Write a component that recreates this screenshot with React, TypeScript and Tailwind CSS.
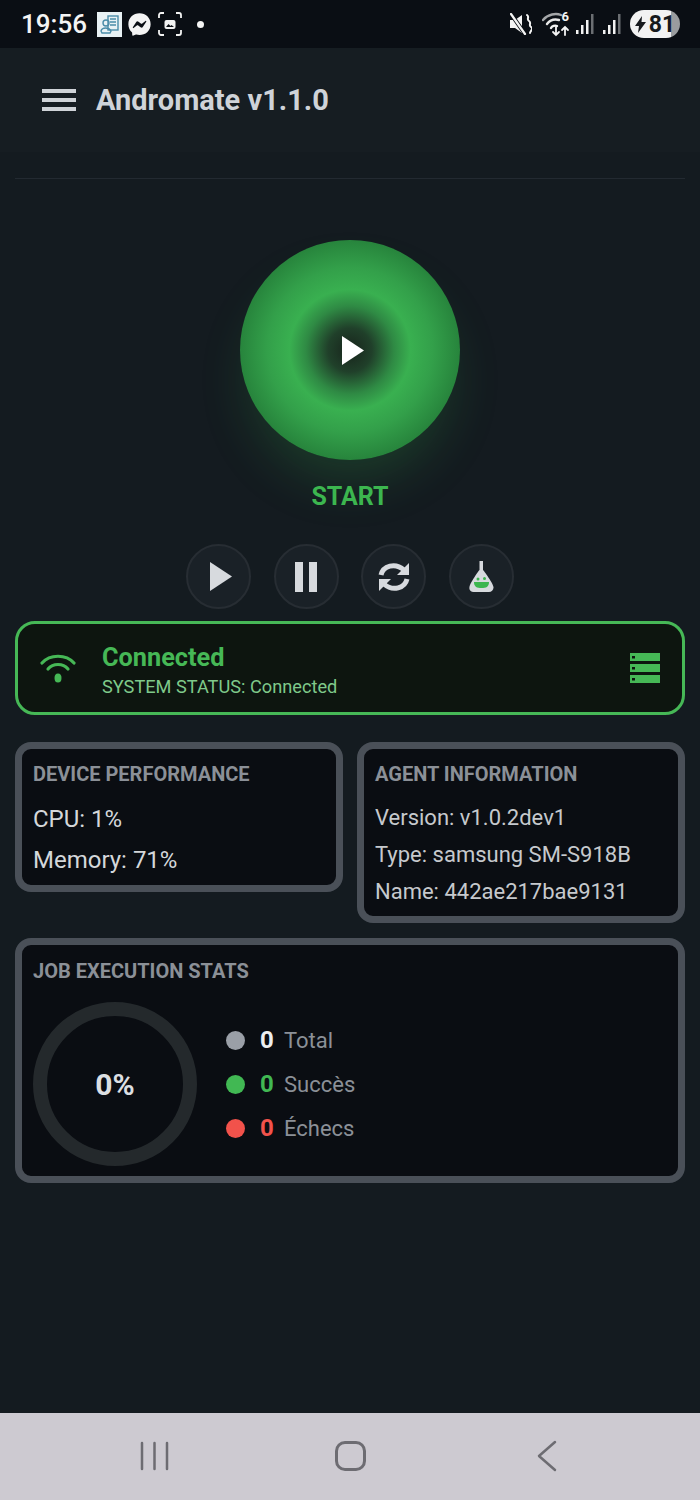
import { FaFacebookMessenger } from 'react-icons/fa';

function SignalBars() {
    return (
        <svg width="18" height="22" viewBox="0 0 18 22">
            <rect x="0" y="17" width="2.5" height="4" fill="#f2f2f2" />
            <rect x="5" y="12" width="2.5" height="9" fill="#f2f2f2" />
            <rect x="10" y="7" width="2.5" height="14" fill="#f2f2f2" />
            <rect x="15" y="1" width="2.5" height="20" fill="#6b6e72" />
        </svg>
    );
}

function StatusBar() {
    return (
        <div className="h-12 bg-[#0a0e14] flex items-center justify-between pl-[21px] pr-5 shrink-0">
            <div className="flex items-center">
                <span className="text-[26px] leading-none font-medium text-[#f4f4f4] w-[76px]">19:56</span>
                <div className="w-[25px] h-[25px] bg-[#e8f1f4] flex items-center justify-center">
                    <svg width="19" height="19" viewBox="0 0 19 19" fill="none" stroke="#4a8ca8" strokeWidth="1.4">
                        <rect x="8" y="1" width="10" height="14" />
                        <path d="M10 4h6M10 7h6M10 10h6" />
                        <circle cx="6" cy="8" r="3" />
                        <path d="M1 16c1-4 8-4 10 0l-1 2H2z" />
                    </svg>
                </div>
                <FaFacebookMessenger className="ml-[6px] text-[#f4f4f4]" size={23} />
                <svg className="ml-[7px]" width="24" height="24" viewBox="0 0 24 24" fill="none" stroke="#f2f2f2" strokeWidth="1.8">
                    <path d="M1 6V3a2 2 0 0 1 2-2h3M18 1h3a2 2 0 0 1 2 2v3M23 18v3a2 2 0 0 1-2 2h-3M6 23H3a2 2 0 0 1-2-2v-3" />
                    <rect x="6.500" y="8" width="11" height="9" rx="2" fill="#f2f2f2" stroke="none" />
                    <path d="M8 15l2.500-3 2 2 1-1 2.500 2z" fill="#0a0e14" stroke="none" />
                </svg>
                <span className="ml-[15px] w-[7px] h-[7px] rounded-full bg-[#f4f4f4]" />
            </div>
            <div className="flex items-center">
                {/* mute */}
                <svg width="22" height="22" viewBox="0 0 22 22" fill="none">
                    <path d="M0 7h5l7-5v18l-7-5H0z" fill="#f4f4f4" />
                    <path d="M1 1l14 20" stroke="#0a0e14" strokeWidth="4" />
                    <path d="M1 1l14 20" stroke="#f4f4f4" strokeWidth="2.200" strokeLinecap="round" />
                    <path d="M17 2c3 2-1 4 2 6s-1 4 2 6-1 4-1 6" stroke="#f4f4f4" strokeWidth="2" strokeLinecap="round" />
                </svg>
                {/* wifi with data arrows */}
                <div className="relative ml-[10px] w-[28px] h-[26px]">
                    <svg width="28" height="26" viewBox="0 0 28 26" fill="none" strokeLinecap="round">
                        <path d="M1 9C6 3 14 2 19 4" stroke="#a4a6a8" strokeWidth="2.400" />
                        <path d="M5 13C8 9 13 8 17 9" stroke="#e8e8e8" strokeWidth="2.400" />
                        <path d="M9 17c1-2 4-3 6-2" stroke="#f4f4f4" strokeWidth="2.400" />
                        <path d="M14 16v8M11 21l3 3 3-3M23 24v-8M20 19l3-3 3 3" stroke="#f4f4f4" strokeWidth="1.800" />
                    </svg>
                    <span className="absolute right-[1px] -top-[1px] text-[13px] leading-none font-bold text-[#f4f4f4]">6</span>
                </div>
                <div className="ml-[6px] flex items-center gap-[9px]">
                    <SignalBars />
                    <SignalBars />
                </div>
                <div className="ml-[9px] w-[50px] h-[28px] rounded-full bg-[linear-gradient(90deg,#f2f2f2_0,#f2f2f2_81%,#9a9c9f_81%)] flex items-center justify-center gap-[3px]">
                    <svg width="11" height="17" viewBox="0 0 11 17" fill="#16191d">
                        <path d="M7 0L0 10h4l-1 7 8-11H6.500z" />
                    </svg>
                    <span className="text-[23px] leading-none font-bold text-[#16191d]">81</span>
                </div>
            </div>
        </div>
    );
}

function ControlButton({ children }: { children: React.ReactNode }) {
    return (
        <button className="w-[65px] h-[65px] rounded-full bg-[#1a2127] border-2 border-[#272d33] flex items-center justify-center">
            {children}
        </button>
    );
}

function Card({ title, className, children }: { title: string; className: string; children: React.ReactNode }) {
    return (
        <div className={`rounded-[16px] border-[7px] border-[#4a5058] bg-[#0a0d12] ${className}`}>
            <h2 className="text-[20px] leading-[24px] font-bold text-[#8b9097]">{title}</h2>
            {children}
        </div>
    );
}

function StatRow({ dot, numColor, label }: { dot: string; numColor: string; label: string }) {
    return (
        <div className="flex items-center h-[44px]">
            <span className={`w-[19px] h-[19px] rounded-full ${dot}`} />
            <span className={`ml-[15px] w-[24px] text-[24px] font-bold ${numColor}`}>0</span>
            <span className="text-[22px] text-[#8b9097]">{label}</span>
        </div>
    );
}

export default function App() {
    return (
        <div className="w-[700px] h-[1500px] flex flex-col bg-[#141b20] font-['Roboto',sans-serif] overflow-hidden">
            <StatusBar />

            {/* header */}
            <div className="h-[104px] shrink-0 bg-[#161d22] flex items-center pl-[42px]">
                <div className="w-[34px] flex flex-col gap-[5px]">
                    <span className="h-[4px] bg-[#cfd3d8]" />
                    <span className="h-[4px] bg-[#cfd3d8]" />
                    <span className="h-[4px] bg-[#cfd3d8]" />
                </div>
                <span className="ml-[20px] text-[29px] leading-none font-bold text-[#cfd3d8]">Andromate v1.1.0</span>
            </div>

            <div className="flex-1 flex flex-col px-[15px]">
                <div className="h-[27px] border-b border-[#232a31]" />

                {/* start */}
                <div className="flex flex-col items-center pt-[61px]">
                    <div className="w-[220px] h-[220px] rounded-full bg-[radial-gradient(circle_closest-side,#18241c_0%,#20402a_20%,#2f8a44_40%,#39b050_55%,#33a04a_75%,#27843c_100%)] shadow-[0_30px_50px_-10px_rgba(55,178,77,0.22)] flex items-center justify-center">
                        <svg className="ml-[6px]" width="22" height="29" viewBox="0 0 22 29" fill="#ffffff">
                            <path d="M0 0L22 14.500L0 29z" />
                        </svg>
                    </div>
                    <span className="mt-[22px] text-[25px] leading-[30px] font-bold text-[#3cb64f]">START</span>
                </div>

                <div className="mt-[32px] flex justify-center gap-[22.6px]">
                    <ControlButton>
                        <svg className="ml-[5px]" width="22" height="29" viewBox="0 0 22 29" fill="#d7dade">
                            <path d="M0 0L22 14.500L0 29z" />
                        </svg>
                    </ControlButton>
                    <ControlButton>
                        <svg width="22" height="30" viewBox="0 0 22 30" fill="#d7dade">
                            <rect x="0" y="0" width="8" height="30" />
                            <rect x="14" y="0" width="8" height="30" />
                        </svg>
                    </ControlButton>
                    <ControlButton>
                        <svg width="32" height="30" viewBox="0 0 32 30" fill="#d7dade">
                            <path d="M3 13C5 4 17 0 26 8" fill="none" stroke="#d7dade" strokeWidth="5" />
                            <path d="M31 1v12H19z" />
                            <path d="M29 17C27 26 15 30 6 22" fill="none" stroke="#d7dade" strokeWidth="5" />
                            <path d="M1 29V17h12z" />
                        </svg>
                    </ControlButton>
                    <ControlButton>
                        <svg width="25" height="31" viewBox="0 0 25 31">
                            <path d="M10.500 0h3.500v9c1 1 10 13 10.500 17 .3 3-2 5-4.500 5H4.500C2 31-.3 29 .5 26 1 22 9.500 10 10.500 9z" fill="#d7dade" />
                            <path d="M5 21h15c0 5-3 6-7.500 6S5 26 5 21z" fill="#3cb64f" />
                            <circle cx="9" cy="18" r="1.500" fill="#3cb64f" />
                            <circle cx="15.500" cy="17.500" r="1.500" fill="#3cb64f" />
                        </svg>
                    </ControlButton>
                </div>

                {/* connection banner */}
                <div className="mt-[12px] h-[94px] rounded-[20px] border-[3px] border-[#46b856] bg-[#0d150f] flex items-center pl-[22px] pr-[22px]">
                    <svg width="36" height="30" viewBox="0 0 36 30" fill="none" stroke="#46b856" strokeWidth="3.200" strokeLinecap="round">
                        <path d="M2 10C10 1 26 1 34 10" />
                        <path d="M8 16C13 10 23 10 28 16" />
                        <ellipse cx="18" cy="25" rx="3.500" ry="4.500" fill="#46b856" stroke="none" />
                    </svg>
                    <div className="ml-[26px] flex-1 pt-[5px]">
                        <div className="text-[25.3px] leading-[30px] font-bold text-[#46b856]">Connected</div>
                        <div className="mt-[2px] text-[18.2px] leading-[24px] text-[#7fc98a]">SYSTEM STATUS: Connected</div>
                    </div>
                    <svg width="30" height="30" viewBox="0 0 30 30" fill="#46b856">
                        <path d="M0 0h30v8H0zM0 11h30v8H0zM0 22h30v8H0z" />
                        <rect x="2" y="3" width="3" height="2.500" fill="#0d150f" />
                        <rect x="2" y="14" width="3" height="2.500" fill="#0d150f" />
                        <rect x="2" y="25" width="3" height="2.500" fill="#0d150f" />
                    </svg>
                </div>

                <div className="mt-[27px] flex items-start gap-[14px]">
                    <Card title="DEVICE PERFORMANCE" className="flex-1 h-[150px] px-[11px] pt-[13px]">
                        <div className="mt-[13px] text-[24px] leading-[41px] text-[#d4d7da]">
                            <div>CPU: 1%</div>
                            <div>Memory: 71%</div>
                        </div>
                    </Card>
                    <Card title="AGENT INFORMATION" className="flex-1 h-[181px] px-[11px] pt-[13px]">
                        <div className="mt-[13px] text-[22px] leading-[37px] text-[#c6c9cd]">
                            <div>Version: v1.0.2dev1</div>
                            <div>Type: samsung SM-S918B</div>
                            <div>Name: 442ae217bae9131</div>
                        </div>
                    </Card>
                </div>

                <Card title="JOB EXECUTION STATS" className="mt-[15px] h-[245px] px-[11px] pt-[14px]">
                    <div className="mt-[19px] flex items-center">
                        <div className="w-[164px] h-[164px] rounded-full border-[14px] border-[#24292c] flex items-center justify-center">
                            <span className="text-[30px] font-bold text-[#dcdfe2]">0%</span>
                        </div>
                        <div className="ml-[29px]">
                            <StatRow dot="bg-[#9a9fa7]" numColor="text-[#eceef0]" label="Total" />
                            <StatRow dot="bg-[#41b853]" numColor="text-[#41b853]" label="Succès" />
                            <StatRow dot="bg-[#f2524b]" numColor="text-[#f2524b]" label="Échecs" />
                        </div>
                    </div>
                </Card>
            </div>

            {/* system nav */}
            <div className="h-[87px] shrink-0 bg-[#cdcad1] flex items-center justify-between pl-[140px] pr-[142px] pb-[2px]">
                <svg width="30" height="30" viewBox="0 0 30 30" stroke="#6d6c72" strokeWidth="2.500" strokeLinecap="round">
                    <path d="M2 2v26M14.500 2v26M27 2v26" />
                </svg>
                <div className="w-[31px] h-[30px] mr-[6px] rounded-[10px] border-[3px] border-[#6d6c72]" />
                <svg width="22" height="32" viewBox="0 0 22 32" fill="none" stroke="#6d6c72" strokeWidth="2.500" strokeLinecap="round" strokeLinejoin="round">
                    <path d="M19 2L3 16l16 14" />
                </svg>
            </div>
        </div>
    );
}
